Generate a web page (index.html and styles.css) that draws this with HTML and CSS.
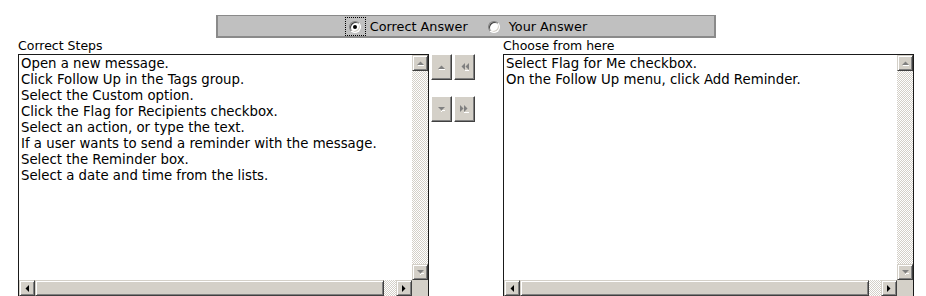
FILE: index.html
```html
<!DOCTYPE html>
<html>
<head>
<meta charset="utf-8">
<link rel="stylesheet" href="styles.css">
</head>
<body>
<div class="page">
  <div class="bar">
    <span class="opt focus"><span class="radio checked"></span></span>
    <span class="lbl">Correct Answer</span>
    <span class="opt second"><span class="radio"></span></span>
    <span class="lbl">Your Answer</span>
  </div>
  <div class="panes">
    <div class="cap">Correct Steps</div>
    <div class="cap-spacer"></div>
    <div class="cap">Choose from here</div>

    <div class="list">
      <div class="content">
        <div>Open a new message.</div>
        <div>Click Follow Up in the Tags group.</div>
        <div>Select the Custom option.</div>
        <div>Click the Flag for Recipients checkbox.</div>
        <div>Select an action, or type the text.</div>
        <div>If a user wants to send a reminder with the message.</div>
        <div>Select the Reminder box.</div>
        <div>Select a date and time from the lists.</div>
      </div>
      <div class="vs">
        <span class="sbtn"><svg width="7" height="5" viewBox="0 0 7 5"><polygon points="0,4 3.5,0.5 7,4" fill="#808080"/><rect x="1" y="4" width="6" height="1" fill="#fff"/></svg></span>
        <span class="track"></span>
        <span class="sbtn"><svg width="7" height="5" viewBox="0 0 7 5"><polygon points="0,0 7,0 3.5,3.5" fill="#808080"/><rect x="4" y="3" width="3" height="1" fill="#fff"/><rect x="3" y="4" width="1" height="1" fill="#fff"/></svg></span>
      </div>
      <div class="hs">
        <span class="sbtn"><svg width="4" height="7" viewBox="0 0 4 7"><polygon points="4,0 4,7 0.5,3.5" fill="#000"/></svg></span>
        <span class="thumb"></span>
        <span class="track"></span>
        <span class="sbtn"><svg width="4" height="7" viewBox="0 0 4 7"><polygon points="0,0 0,7 3.5,3.5" fill="#000"/></svg></span>
      </div>
      <div class="corner"></div>
    </div>

    <div class="mid">
      <span class="mbtn"><svg width="7" height="5" viewBox="0 0 7 5"><polygon points="0,4 3.5,0.5 7,4" fill="#808080"/><rect x="1" y="4" width="6" height="1" fill="#fff"/></svg></span>
      <span class="mbtn"><svg width="8" height="8" viewBox="0 0 8 8"><polygon points="4,0 4,7 0.5,3.5" fill="#808080"/><polygon points="8,0 8,7 4.5,3.5" fill="#808080"/><rect x="4" y="7" width="4" height="1" fill="#fff"/></svg></span>
      <span class="mbtn"><svg width="7" height="5" viewBox="0 0 7 5"><polygon points="0,0 7,0 3.5,3.5" fill="#808080"/><rect x="4" y="3" width="3" height="1" fill="#fff"/><rect x="3" y="4" width="1" height="1" fill="#fff"/></svg></span>
      <span class="mbtn"><svg width="9" height="8" viewBox="0 0 9 8"><polygon points="0,0 0,7 3.5,3.5" fill="#808080"/><polygon points="4,0 4,7 7.5,3.5" fill="#808080"/><rect x="4" y="7" width="5" height="1" fill="#fff"/></svg></span>
    </div>

    <div class="list">
      <div class="content">
        <div>Select Flag for Me checkbox.</div>
        <div>On the Follow Up menu, click Add Reminder.</div>
      </div>
      <div class="vs">
        <span class="sbtn"><svg width="7" height="5" viewBox="0 0 7 5"><polygon points="0,4 3.5,0.5 7,4" fill="#808080"/><rect x="1" y="4" width="6" height="1" fill="#fff"/></svg></span>
        <span class="track"></span>
        <span class="sbtn"><svg width="7" height="5" viewBox="0 0 7 5"><polygon points="0,0 7,0 3.5,3.5" fill="#808080"/><rect x="4" y="3" width="3" height="1" fill="#fff"/><rect x="3" y="4" width="1" height="1" fill="#fff"/></svg></span>
      </div>
      <div class="hs">
        <span class="sbtn"><svg width="4" height="7" viewBox="0 0 4 7"><polygon points="4,0 4,7 0.5,3.5" fill="#000"/></svg></span>
        <span class="thumb"></span>
        <span class="track"></span>
        <span class="sbtn"><svg width="4" height="7" viewBox="0 0 4 7"><polygon points="0,0 0,7 3.5,3.5" fill="#000"/></svg></span>
      </div>
      <div class="corner"></div>
    </div>
  </div>
</div>
</body>
</html>
```
FILE: styles.css
```css
html, body {
  margin: 0;
  padding: 0;
  background: #fff;
  overflow: hidden;
}
body {
  font-family: "DejaVu Sans", Verdana, sans-serif;
  font-size: 13px;
  color: #000;
}
.page {
  width: 896px;
  margin-left: 18px;
  padding-top: 15px;
}
.bar {
  width: 496px;
  height: 20px;
  margin: 0 auto;
  border: 2px solid #8a8a8a;
  border-top-width: 1px;
  background: #c0c0c0;
  display: flex;
  justify-content: center;
  align-items: flex-end;
}
.opt {
  box-sizing: border-box;
  width: 21px;
  height: 19px;
  display: flex;
  align-items: center;
  justify-content: center;
  flex: none;
}
.opt.focus {
  border: 1px dotted #000;
}
.opt.second {
  margin-left: 16px;
}
.lbl {
  margin-left: 4px;
  line-height: 19px;
  font-size: 12.8px;
  white-space: nowrap;
  padding-top: 1px;
}
.radio {
  box-sizing: border-box;
  width: 12px;
  height: 12px;
  border-radius: 50%;
  background: #fff;
  border: 1px solid;
  border-color: #808080 #ffffff #ffffff #808080;
  box-shadow: inset 1px 1px 0 #404040, inset -1px -1px 0 #d4d0c8;
  display: flex;
  align-items: center;
  justify-content: center;
}
.radio.checked::after {
  content: "";
  width: 4px;
  height: 4px;
  border-radius: 50%;
  background: #000;
}
.panes {
  display: grid;
  grid-template-columns: 411px 74px 411px;
  grid-template-rows: 16px auto;
}
.cap {
  line-height: 16px;
  font-size: 12.5px;
  white-space: nowrap;
}
.list {
  box-sizing: border-box;
  height: 243px;
  border: 1px solid #1a1a1a;
  display: grid;
  grid-template-columns: 1fr 16px;
  grid-template-rows: 1fr 16px;
  overflow: hidden;
}
.content {
  padding: 1px 2px 0 2px;
  font-size: 13.3px;
  line-height: 16px;
  white-space: nowrap;
  overflow: hidden;
}
.vs {
  display: flex;
  flex-direction: column;
}
.hs {
  display: flex;
}
.sbtn, .mbtn, .thumb, .corner {
  box-sizing: border-box;
  background: #d4d0c8;
}
.sbtn {
  width: 16px;
  height: 16px;
  flex: none;
  display: flex;
  align-items: center;
  justify-content: center;
  border: 1px solid;
  border-color: #d4d0c8 #404040 #404040 #d4d0c8;
  box-shadow: inset 1px 1px 0 #fff, inset -1px -1px 0 #808080;
}
.thumb {
  width: 349px;
  height: 16px;
  flex: none;
  border: 1px solid;
  border-color: #d4d0c8 #404040 #404040 #d4d0c8;
  box-shadow: inset 1px 1px 0 #fff, inset -1px -1px 0 #808080;
}
.track {
  flex: 1;
  background: repeating-conic-gradient(#d4d0c8 0 25%, #ffffff 0 50%) 0 0 / 2px 2px;
}
.mid {
  padding-left: 2px;
  display: grid;
  grid-template-columns: 21px 21px;
  grid-auto-rows: 26px;
  column-gap: 2px;
  row-gap: 16px;
  align-content: start;
}
.mbtn {
  display: flex;
  align-items: center;
  justify-content: center;
  border: 1px solid;
  border-color: #ffffff #404040 #404040 #ffffff;
  box-shadow: inset -1px -1px 0 #808080;
}
```
